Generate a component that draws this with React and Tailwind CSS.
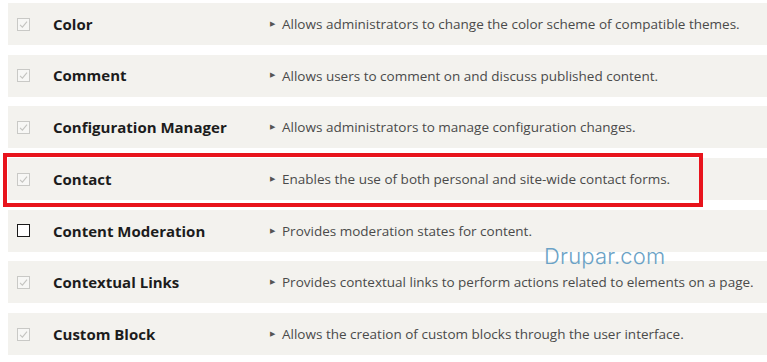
import React from 'react';

const modules = [
  { name: 'Color', desc: 'Allows administrators to change the color scheme of compatible themes.', locked: true },
  { name: 'Comment', desc: 'Allows users to comment on and discuss published content.', locked: true },
  { name: 'Configuration Manager', desc: 'Allows administrators to manage configuration changes.', locked: true },
  { name: 'Contact', desc: 'Enables the use of both personal and site-wide contact forms.', locked: true, highlight: true },
  { name: 'Content Moderation', desc: 'Provides moderation states for content.', locked: false },
  { name: 'Contextual Links', desc: 'Provides contextual links to perform actions related to elements on a page.', locked: true },
  { name: 'Custom Block', desc: 'Allows the creation of custom blocks through the user interface.', locked: true },
];

// disabled + checked checkbox (required module)
const LockedCheck = () => (
  <svg width="13" height="13" viewBox="0 0 13 13" className="shrink-0">
    <rect x="0.5" y="0.5" width="12" height="12" fill="#f7f7f5" stroke="#c9c9c6" />
    <path d="M3 6.8 L5.4 9.2 L10 3.6" fill="none" stroke="#c4c4c0" strokeWidth="1.1" />
  </svg>
);

const EmptyCheck = () => (
  <span className="block w-[13px] h-[13px] shrink-0 bg-white border border-[#1a1a1a]" />
);

const ModuleRow = ({ mod }) => (
  <div className="relative">
    <div className="flex items-center h-[42px] ml-[8px] bg-[#f3f2ee]">
      <div className="w-[45px] pl-[9px] flex items-center">
        {mod.locked ? <LockedCheck /> : <EmptyCheck />}
      </div>
      <div className="w-[217px] text-[15px] font-bold text-[#1c1c1c] whitespace-nowrap">
        {mod.name}
      </div>
      <div className="flex items-center text-[13.5px] text-[#4a4a4a] whitespace-nowrap">
        <span className="text-[7px] text-[#555] mr-[7px]">▶</span>
        {mod.desc}
      </div>
    </div>
    {mod.highlight && (
      <div className="absolute left-[3px] top-[-5px] w-[700px] h-[54px] border-[4px] border-[#e8141c]" />
    )}
  </div>
);

const App = () => {
  return (
    <div className="relative w-[767px] h-[362px] bg-white overflow-hidden pt-[3px] flex flex-col gap-[9.7px] font-['Open_Sans',sans-serif]">
      {modules.map((m) => (
        <ModuleRow key={m.name} mod={m} />
      ))}
      <div className="absolute left-[544px] top-[240px] text-[22px] font-light tracking-[0.2px] text-[#6ba2c6] font-['Inter',sans-serif]">
        Drupar.com
      </div>
    </div>
  );
};

export default App;
